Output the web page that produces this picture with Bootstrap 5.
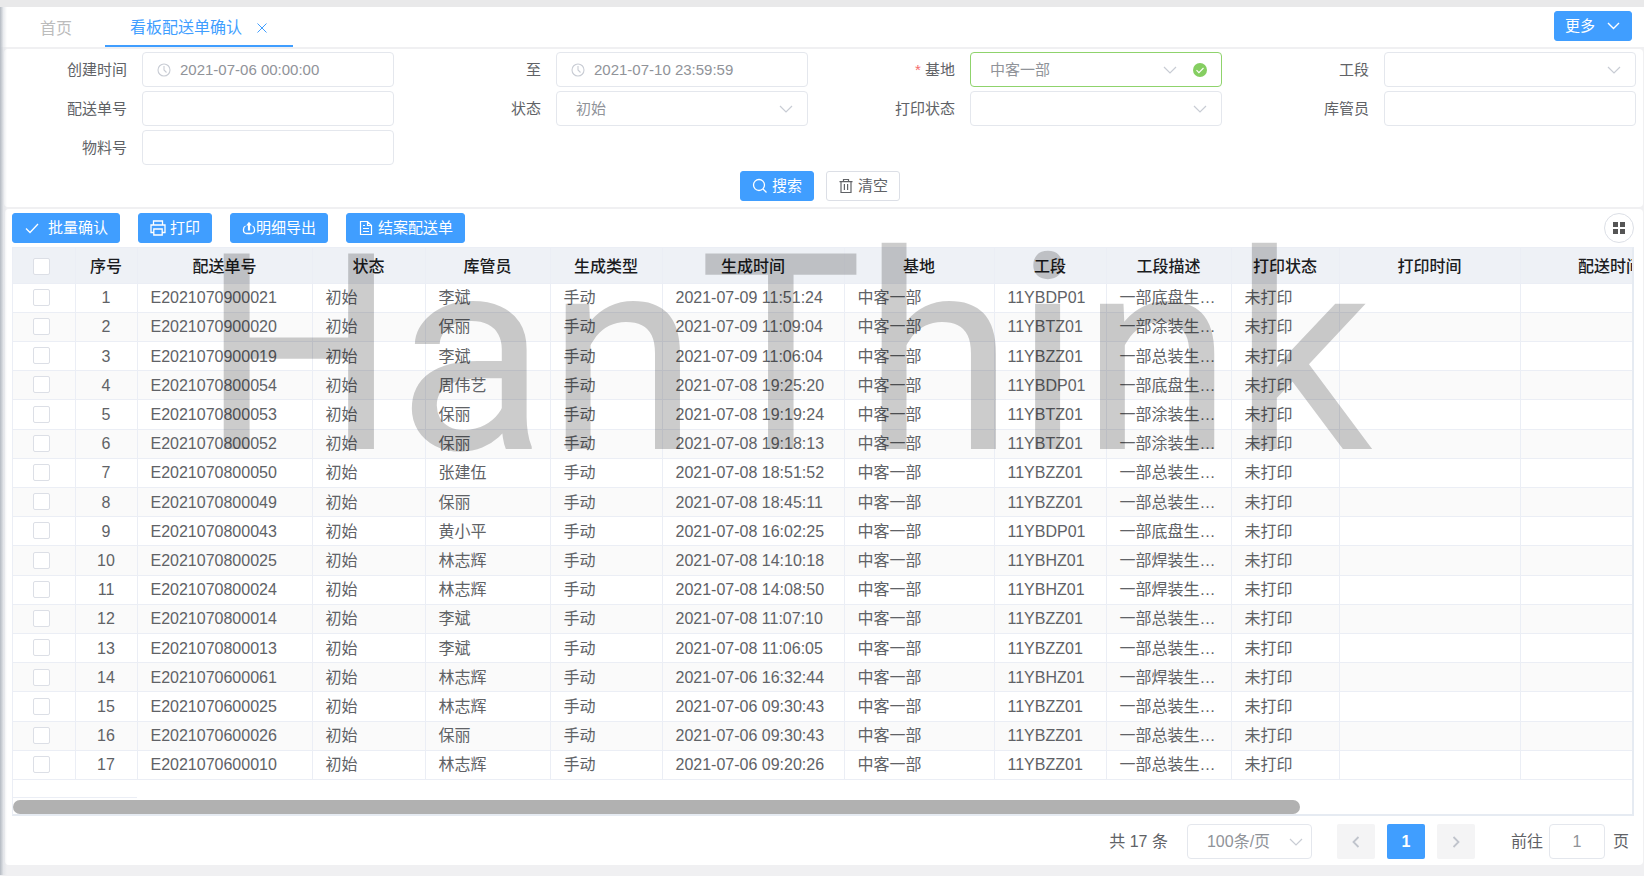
<!DOCTYPE html>
<html lang="zh-CN">
<head>
<meta charset="utf-8">
<meta name="viewport" content="width=device-width, initial-scale=1">
<title>看板配送单确认</title>
<link href="https://cdn.jsdelivr.net/npm/bootstrap@5.3.0/dist/css/bootstrap.min.css" rel="stylesheet">
<style>
:root{--brand:#409eff;--line:#e4e7ed;--ink:#606266;--soft:#909399}
body{font-family:"Liberation Sans","Noto Sans CJK SC",sans-serif;font-size:15px;line-height:20px;color:var(--ink);background:#f0f0f2;overflow-x:hidden}
.shell{border-top:7px solid #e9e9ea;padding-bottom:10px}
.edge-shade{position:absolute;inset:0 auto 0 0;width:7px;background:linear-gradient(90deg,#b4bac2,rgba(220,223,228,.6) 50%,transparent);z-index:3}
.tabbar{height:40px;font-size:16px;padding-right:12px}
.tabbar a{height:40px;line-height:24px;padding-top:4px;text-decoration:none;display:flex;align-items:center}
.tabbar .tab-home{padding-left:40px;padding-right:33px;color:#bcbcbc}
.tabbar .tab-current{padding-left:25px;padding-right:25px;color:var(--brand);border-bottom:2px solid var(--brand)}
.tab-close{border:0;background:none;padding:0;margin-left:14px;color:var(--brand);line-height:0}
.btn{height:30px;padding:0 11px;font-size:15px;line-height:28px;border-radius:3px;display:inline-flex;align-items:center}
.btn-primary{--bs-btn-bg:var(--brand);--bs-btn-border-color:var(--brand)}
.btn-plain{background:#fff;border:1px solid #dcdfe6;color:var(--ink)}
.tabbar .btn{padding:0 10px;margin-bottom:2px}
.panel{background:#fff;border-radius:4px}
.search-panel{margin:2px 1px 2px 4px;padding:3px 7px 6px 0}
.field{display:flex;align-items:center}
.field label{flex:none;width:138px;padding-right:15px;text-align:right}
.field .form-control,.field .form-select{flex:1;min-width:0}
.form-control,.form-select{height:35px;font-size:15px;line-height:20px;padding:0 19px;border:1px solid var(--line);border-radius:4px;color:var(--soft);background-color:#fff}
.form-select{background-image:url("data:image/svg+xml,%3Csvg xmlns='http://www.w3.org/2000/svg' viewBox='0 0 14 14'%3E%3Cpath d='M1 4l6 6 6-6' fill='none' stroke='%23c8ccd4' stroke-width='1.2'/%3E%3C/svg%3E");background-size:14px;background-position:right 14px center}
.with-clock{padding-left:37px;background-image:url("data:image/svg+xml,%3Csvg xmlns='http://www.w3.org/2000/svg' viewBox='0 0 14 14' fill='none' stroke='%23c8ccd4' stroke-width='1.1'%3E%3Ccircle cx='7' cy='7' r='6'/%3E%3Cpath d='M7 3v4l2.5 2.5'/%3E%3C/svg%3E");background-repeat:no-repeat;background-size:14px;background-position:14px center}
.checked-ok{border-color:#8fd36c;background-image:url("data:image/svg+xml,%3Csvg xmlns='http://www.w3.org/2000/svg' viewBox='0 0 14 14'%3E%3Cpath d='M1 4l6 6 6-6' fill='none' stroke='%23c8ccd4' stroke-width='1.2'/%3E%3C/svg%3E"),url("data:image/svg+xml,%3Csvg xmlns='http://www.w3.org/2000/svg' viewBox='0 0 14 14'%3E%3Ccircle cx='7' cy='7' r='7' fill='%2385ce61'/%3E%3Cpath d='M3.5 7.2l2.4 2.4 4.6-4.6' fill='none' stroke='%23fff' stroke-width='1.1'/%3E%3C/svg%3E");background-size:14px,14px;background-position:right 44px center,right 14px center}
.star{color:#f56c6c}
.search-actions{gap:12px;margin-top:6px}
.list-panel{margin:0 1px 0 5px;padding:4px 9px 6px 7px}
.toolbar{gap:18px}
.round-btn{width:30px;height:30px;border:1px solid #dcdfe6;border-radius:50%;background:#fff;display:flex;align-items:center;justify-content:center;padding:0}
.grid-box{margin-top:4px;border:1px solid #ebeef5;border-right:2px solid #e6ebf2;border-bottom:2px solid #e6ebf2;overflow:hidden}
.data-grid{table-layout:fixed;width:1687px;height:532px;font-size:16px;margin:0}
.data-grid th,.data-grid td{height:29px;padding:1px 13px 0;border-right:1px solid #ebeef5;border-bottom:1px solid #ebeef5;white-space:nowrap;overflow:hidden;line-height:20px}
.data-grid th{height:35px;padding:4px 0 0;background:#eef1f6;color:#1b1c1e;font-weight:500;text-align:center}
.data-grid tbody tr:nth-child(even){background:#fafafa}
.data-grid .mid{text-align:center;padding:1px 0 0}
.data-grid .form-check-input{float:none;width:17px;height:17px;margin:-3px 0 0;border:1px solid #dcdfe6;border-radius:2px;display:inline-block;vertical-align:middle;background-color:#fff}
.data-grid tr>:first-child{padding-right:4px}
.pinned-end{width:124px;height:18px;border-bottom:1px solid #ebeef5}
.scroll-thumb{height:14px;margin-top:2px;border-radius:7px;background:#b1b1b1}
.watermark{position:absolute;left:196px;top:36px;font-family:Roboto,sans-serif;font-size:275px;line-height:220px;color:rgba(0,0,0,.2);pointer-events:none;white-space:nowrap;z-index:2}
.pager{font-size:16px;margin:8px -3px 0 0}
.pager .form-select,.pager .form-control{font-size:16px}
.pager .per-page{width:125px;margin:0 25px 0 19px;background-position:right 8px center}
.page-no{width:38px;height:35px;border:0;border-radius:2px;background:#f4f4f5;color:#c0c4cc;padding:0;display:flex;align-items:center;justify-content:center}
.page-no.now{margin:0 12px;background:var(--brand);color:#fff;font-weight:700}
.pager label{margin:0 6px 0 36px}
.pager .jump-box{width:56px}
</style>
</head>
<body>
<div class="shell position-relative">
  <div class="edge-shade"></div>
  <nav class="tabbar bg-white d-flex align-items-center">
    <a href="#" class="tab-home">首页</a>
    <a href="#" class="tab-current">看板配送单确认
      <button class="tab-close" type="button" aria-label="关闭"><svg width="12" height="12" viewBox="0 0 12 12" fill="none" stroke="currentColor"><path d="M1.500 1.500l9 9M10.500 1.500l-9 9"/></svg></button></a>
    <button class="btn btn-primary ms-auto" type="button">更多<svg class="ms-2" width="18" height="14" viewBox="0 0 18 14" fill="none" stroke="#fff" stroke-width="1.400"><path d="M5 4l5.500 5.500L16 4"/></svg></button>
  </nav>

  <form class="panel search-panel">
    <div class="row row-cols-4 gx-4 gy-1">
      <div class="col field"><label for="f1">创建时间</label><input id="f1" class="form-control with-clock" value="2021-07-06 00:00:00"></div>
      <div class="col field"><label for="f2">至</label><input id="f2" class="form-control with-clock" value="2021-07-10 23:59:59"></div>
      <div class="col field"><label for="f3"><span class="star">*</span> 基地</label><select id="f3" class="form-select checked-ok"><option>中客一部</option></select></div>
      <div class="col field"><label for="f4">工段</label><select id="f4" class="form-select"><option></option></select></div>
      <div class="col field"><label for="f5">配送单号</label><input id="f5" class="form-control"></div>
      <div class="col field"><label for="f6">状态</label><select id="f6" class="form-select"><option>初始</option></select></div>
      <div class="col field"><label for="f7">打印状态</label><select id="f7" class="form-select"><option></option></select></div>
      <div class="col field"><label for="f8">库管员</label><input id="f8" class="form-control"></div>
      <div class="col field"><label for="f9">物料号</label><input id="f9" class="form-control"></div>
    </div>
    <div class="search-actions d-flex justify-content-center">
      <button class="btn btn-primary" type="button"><svg class="me-1" width="16" height="16" viewBox="0 0 16 16" fill="none" stroke="#fff" stroke-width="1.300"><circle cx="7" cy="7" r="5.500"/><path d="M11 11l3.500 3.500"/></svg>搜索</button>
      <button class="btn btn-plain" type="button"><svg class="me-1" width="16" height="16" viewBox="0 0 16 16" fill="none" stroke="currentColor" stroke-width="1.200"><path d="M1.500 3.600h13M5.500 3.500v-2h5v2M3 3.600v10.900h10V3.600M6.400 6v6M9.600 6v6"/></svg>清空</button>
    </div>
  </form>

  <section class="panel list-panel position-relative">
    <div class="toolbar d-flex align-items-center">
      <button class="btn btn-primary" type="button"><svg class="me-2" width="16" height="16" viewBox="0 0 16 16" fill="none" stroke="#fff" stroke-width="1.300"><path d="M2 8.500l4 4 8-8.500"/></svg>批量确认</button>
      <button class="btn btn-primary" type="button"><svg class="me-1" width="16" height="16" viewBox="0 0 16 16" fill="none" stroke="#fff" stroke-width="1.300"><path d="M3.500 4.500V1h9v3.500M3.500 12.500H1V5h14v7.500h-2.500M3.800 9h8.400v6H3.800z"/></svg>打印</button>
      <button class="btn btn-primary" type="button"><svg width="14" height="14" viewBox="0 0 14 14" fill="none" stroke="#fff" stroke-width="1.300"><path d="M3.500 5C2 5.500 1.500 7 1.500 8.500v1a3 3 0 0 0 3 3h5a3 3 0 0 0 3-3v-1c0-1.500-.5-3-2-3.500"/><path d="M7 9.500V3" stroke-width="2.200"/><path d="M4.200 4.500L7 .8l2.800 3.700z" fill="#fff" stroke="none"/></svg>明细导出</button>
      <button class="btn btn-primary" type="button"><svg class="me-1" width="16" height="16" viewBox="0 0 16 16" fill="none" stroke="#fff" stroke-width="1.200"><path d="M2.500 1.500h7l4 4v9h-11zM9.500 1.500v4h4M5 8.500h6M5 11.500h6M5 5.500h2"/></svg>结案配送单</button>
      <button class="round-btn ms-auto" type="button" aria-label="列设置"><svg width="12" height="12" viewBox="0 0 12 12" fill="#555"><path d="M0 0h5v5H0zM7 0h5v5H7zM0 7h5v5H0zM7 7h5v5H7z"/></svg></button>
    </div>

    <div class="grid-box">
      <table class="data-grid">
        <colgroup><col style="width:62px"><col style="width:62px"><col style="width:175px"><col style="width:113px"><col style="width:125px"><col style="width:112px"><col style="width:182px"><col style="width:150px"><col style="width:112px"><col style="width:125px"><col style="width:108px"><col style="width:181px"><col style="width:180px"></colgroup>
        <thead><tr><th><input class="form-check-input" type="checkbox" aria-label="全选"></th><th>序号</th><th>配送单号</th><th>状态</th><th>库管员</th><th>生成类型</th><th>生成时间</th><th>基地</th><th>工段</th><th>工段描述</th><th>打印状态</th><th>打印时间</th><th>配送时间</th></tr></thead>
        <tbody id="rows"></tbody>
      </table>
      <div class="pinned-end"></div>
      <div class="scroll-thumb" style="width:79.500%"></div>
    </div>
    <div class="watermark" aria-hidden="true">HanThink</div>

    <div class="pager d-flex align-items-center justify-content-end">
      <span>共 17 条</span>
      <select class="form-select per-page" aria-label="每页条数"><option>100条/页</option></select>
      <button class="page-no" type="button" aria-label="上一页"><svg width="14" height="14" viewBox="0 0 14 14" fill="none" stroke="currentColor" stroke-width="1.800"><path d="M9.500 2l-5 5 5 5"/></svg></button>
      <button class="page-no now" type="button">1</button>
      <button class="page-no" type="button" aria-label="下一页"><svg width="14" height="14" viewBox="0 0 14 14" fill="none" stroke="currentColor" stroke-width="1.800"><path d="M4.500 2l5 5-5 5"/></svg></button>
      <label for="jump">前往</label>
      <input id="jump" class="form-control jump-box text-center px-0" value="1">
      <span class="mx-1 px-1">页</span>
    </div>
  </section>
</div>
<script>
const orders = [
  ['0900021','李斌','09 11:51:24','DP','底盘'],
  ['0900020','保丽','09 11:09:04','TZ','涂装'],
  ['0900019','李斌','09 11:06:04','ZZ','总装'],
  ['0800054','周伟艺','08 19:25:20','DP','底盘'],
  ['0800053','保丽','08 19:19:24','TZ','涂装'],
  ['0800052','保丽','08 19:18:13','TZ','涂装'],
  ['0800050','张建伍','08 18:51:52','ZZ','总装'],
  ['0800049','保丽','08 18:45:11','ZZ','总装'],
  ['0800043','黄小平','08 16:02:25','DP','底盘'],
  ['0800025','林志辉','08 14:10:18','HZ','焊装'],
  ['0800024','林志辉','08 14:08:50','HZ','焊装'],
  ['0800014','李斌','08 11:07:10','ZZ','总装'],
  ['0800013','李斌','08 11:06:05','ZZ','总装'],
  ['0600061','林志辉','06 16:32:44','HZ','焊装'],
  ['0600025','林志辉','06 09:30:43','ZZ','总装'],
  ['0600026','保丽','06 09:30:43','ZZ','总装'],
  ['0600010','林志辉','06 09:20:26','ZZ','总装']
];
document.getElementById('rows').innerHTML = orders.map(([no, keeper, time, code, shop], i) =>
  `<tr><td class="mid"><input class="form-check-input" type="checkbox" aria-label="选择第${i + 1}行"></td><td class="mid">${i + 1}</td><td>E202107${no}</td><td>初始</td><td>${keeper}</td><td>手动</td><td>2021-07-${time}</td><td>中客一部</td><td>11YB${code}01</td><td>一部${shop}生…</td><td>未打印</td><td></td><td></td></tr>`).join('');
</script>
<script src="https://cdn.jsdelivr.net/npm/bootstrap@5.3.0/dist/js/bootstrap.bundle.min.js"></script>
</body>
</html>
